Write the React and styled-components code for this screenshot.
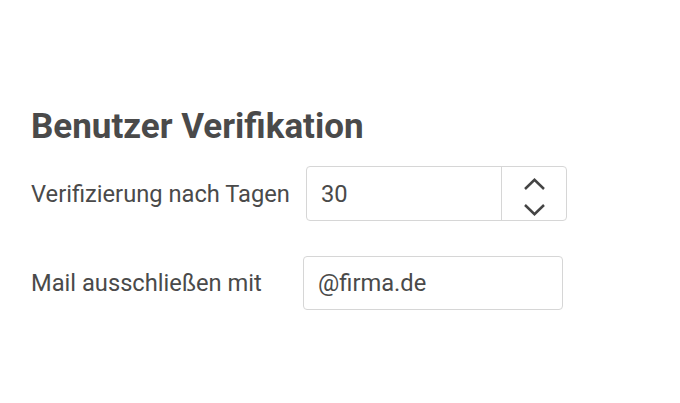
import React, { useState } from "react";
import styled, { createGlobalStyle } from "styled-components";

const GlobalStyle = createGlobalStyle`
  body {
    margin: 0;
    background: #ffffff;
    font-family: Roboto, "Liberation Sans", sans-serif;
  }
`;

function Settings() {
  const [days, set_days] = useState(30);
  const [mail, set_mail] = useState("@firma.de");

  return (
    <Page>
      <Title>Benutzer Verifikation</Title>

      <Row>
        <Label labelWidth={275}>Verifizierung nach Tagen</Label>
        <NumberBox>
          <NumberValue
            value={days}
            onChange={(e) => set_days(e.target.value)}
          />
          <Spinner>
            <SpinButton onClick={() => set_days(Number(days) + 1)}>
              <svg width="23" height="12" viewBox="0 0 23 12">
                <path d="M2 11 L11.5 1.8 L21 11" fill="none" stroke="#444" strokeWidth="2.5" />
              </svg>
            </SpinButton>
            <SpinButton onClick={() => set_days(Number(days) - 1)}>
              <svg width="23" height="12" viewBox="0 0 23 12">
                <path d="M2 1 L11.5 10.2 L21 1" fill="none" stroke="#444" strokeWidth="2.5" />
              </svg>
            </SpinButton>
          </Spinner>
        </NumberBox>
      </Row>

      <Row>
        <Label labelWidth={272}>Mail ausschließen mit</Label>
        <TextInput value={mail} onChange={(e) => set_mail(e.target.value)} />
      </Row>
    </Page>
  );
}

// Style
const Page = styled.div`
  padding: 109px 0 0 31px;
  color: #4a4a4a;
`;

const Title = styled.h2`
  margin: 0 0 22px 0;
  font-size: 35px;
  font-weight: 700;
  color: #4a4a4a;
  line-height: 35px;
`;

const Row = styled.div`
  display: flex;
  align-items: center;
  margin-bottom: 35px;
`;

const Label = styled.div`
  width: ${(props) => props.labelWidth}px;
  flex-shrink: 0;
  font-size: 23.7px;
  color: #4a4a4a;
`;

const NumberBox = styled.div`
  display: flex;
  width: 261px;
  height: 55px;
  box-sizing: border-box;
  border: 1px solid #d6d6d6;
  border-radius: 4px;
`;

const NumberValue = styled.input`
  flex: 1;
  min-width: 0;
  border: none;
  outline: none;
  background: none;
  padding: 0 0 0 14px;
  font-family: Roboto, "Liberation Sans", sans-serif;
  font-size: 23.7px;
  color: #4a4a4a;
`;

const Spinner = styled.div`
  width: 65px;
  border-left: 1px solid #d6d6d6;
  display: flex;
  flex-direction: column;
  justify-content: center;
  align-items: center;
  padding-top: 6px;
  box-sizing: border-box;
  gap: 14px;
`;

const SpinButton = styled.button`
  border: none;
  background: none;
  padding: 0;
  height: 12px;
  display: flex;
  cursor: pointer;
`;

const TextInput = styled.input`
  width: 260px;
  height: 54px;
  box-sizing: border-box;
  border: 1px solid #d6d6d6;
  border-radius: 4px;
  outline: none;
  padding: 0 0 0 14px;
  font-family: Roboto, "Liberation Sans", sans-serif;
  font-size: 23.7px;
  color: #4a4a4a;
`;

export default function App() {
  return (
    <>
      <GlobalStyle />
      <Settings />
    </>
  );
}
